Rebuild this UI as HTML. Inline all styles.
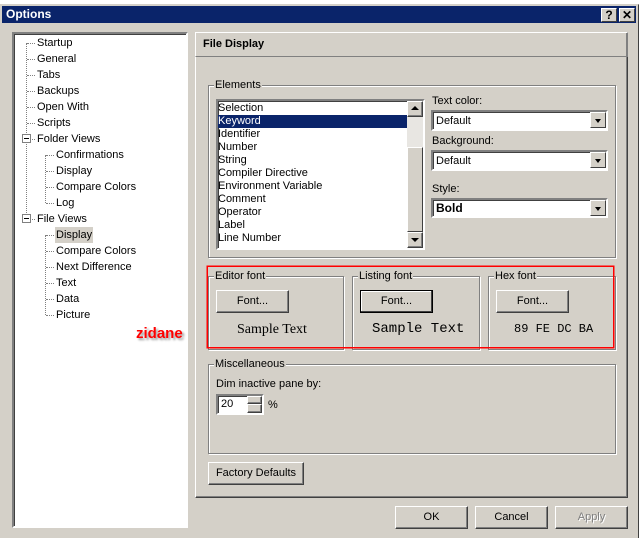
<!DOCTYPE html>
<html><head><meta charset="utf-8"><style>
*{box-sizing:border-box;margin:0;padding:0}
body{width:641px;height:538px;background:#fff;font-family:"Liberation Sans",sans-serif;font-size:11px;color:#000;position:relative;overflow:hidden}
.a{position:absolute}
.win{left:0;top:4px;width:639px;height:534px;background:#d4d0c8;border-right:1px solid #404040;border-top:1px solid #d4d0c8}
.title{left:2px;top:6px;width:634px;height:17px;background:#0a246a;color:#fff;font-weight:bold;font-size:12px;line-height:17px;padding-left:4px}
.tb{top:8px;width:16px;height:14px;background:#d4d0c8;border:1px solid;border-color:#fff #404040 #404040 #fff;font-weight:bold;font-size:12px;line-height:12px;text-align:center;color:#000}
.sunk{border:2px solid;border-color:#808080 #fff #fff #808080;box-shadow:inset 1px 1px 0 #404040}
.grp{border:1px solid #808080;box-shadow:1px 1px 0 #fff, inset 1px 1px 0 #fff}
.lg{background:#d4d0c8;padding:0 1px;line-height:12px}
.btn{background:#d4d0c8;border:1px solid;border-color:#fff #404040 #404040 #fff;box-shadow:inset -1px -1px 0 #808080;text-align:center;line-height:20px}
.t{line-height:16px;white-space:nowrap}
.combo{background:#fff;border:2px solid;border-color:#808080 #fff #fff #808080;box-shadow:inset 1px 1px 0 #404040;padding-left:3px;line-height:18px}
.arr{position:absolute;right:0;top:0;width:16px;height:16px;background:#d4d0c8;border:1px solid;border-color:#fff #404040 #404040 #fff}
.arr:after{content:"";position:absolute;left:4px;top:6px;border:3.5px solid transparent;border-top:4px solid #000;border-bottom:0}
.dl{border-top:1px dotted #808080}
.dv{border-left:1px dotted #808080}
</style></head><body>
<div class="a win"></div>
<div class="a title">Options</div>
<div class="a tb" style="left:601px">?</div>
<div class="a tb" style="left:619px">✕</div>

<!-- tree -->
<div class="a sunk" style="left:12px;top:32px;width:176px;height:496px;background:#fff"></div>
<div class="a dv" style="left:26px;top:43px;height:176px"></div>
<div class="a dv" style="left:45px;top:155px;height:48px"></div>
<div class="a dv" style="left:45px;top:235px;height:80px"></div>
<div id="tree"></div>
<div class="a" style="left:22px;top:134px;width:9px;height:9px;border:1px solid #808080;background:#fff"><div class="a" style="left:1px;top:3px;width:5px;height:1px;background:#000"></div></div>
<div class="a" style="left:22px;top:214px;width:9px;height:9px;border:1px solid #808080;background:#fff"><div class="a" style="left:1px;top:3px;width:5px;height:1px;background:#000"></div></div>

<!-- right panel -->
<div class="a" style="left:195px;top:32px;width:433px;height:466px;border:1px solid;border-color:#fff #404040 #404040 #fff;box-shadow:inset -1px -1px 0 #808080"></div>
<div class="a" style="left:195px;top:32px;width:433px;height:25px;border:1px solid;border-color:#fff #808080 #808080 #fff;font-weight:bold;line-height:22px;padding-left:7px">File Display</div>

<div class="a grp" style="left:208px;top:85px;width:408px;height:173px"></div>
<div class="a lg" style="left:214px;top:79px">Elements</div>
<div class="a sunk" style="left:216px;top:99px;width:209px;height:151px;background:#fff"></div>
<div class="a" style="left:218px;top:101px;line-height:13px;padding-top:1px">
<div>Selection</div><div style="background:#0a246a;color:#fff;width:189px">Keyword</div><div>Identifier</div><div>Number</div><div>String</div><div>Compiler Directive</div><div>Environment Variable</div><div>Comment</div><div>Operator</div><div>Label</div><div>Line Number</div></div>
<div class="a" style="left:407px;top:101px;width:16px;height:147px;background:#e8e6e2"></div>
<div class="a" style="left:407px;top:147px;width:16px;height:85px;background:#d4d0c8;border:1px solid;border-color:#fff #404040 #404040 #fff"></div>
<div class="a btn" style="left:407px;top:101px;width:16px;height:16px"></div>
<div class="a" style="left:411px;top:106px;border:4px solid transparent;border-bottom:4px solid #000;border-top:0"></div>
<div class="a btn" style="left:407px;top:232px;width:16px;height:16px"></div>
<div class="a" style="left:411px;top:238px;border:4px solid transparent;border-top:4px solid #000;border-bottom:0"></div>

<div class="a" style="left:432px;top:95px">Text color:</div>
<div class="a combo" style="left:431px;top:110px;width:177px;height:21px">Default<div class="arr"></div></div>
<div class="a" style="left:432px;top:135px">Background:</div>
<div class="a combo" style="left:431px;top:150px;width:177px;height:21px">Default<div class="arr"></div></div>
<div class="a" style="left:432px;top:183px">Style:</div>
<div class="a combo" style="left:431px;top:198px;width:177px;height:20px;font-weight:bold;font-size:12px;line-height:17px">Bold<div class="arr"></div></div>

<!-- font groups -->
<div class="a grp" style="left:208px;top:276px;width:136px;height:74px"></div>
<div class="a lg" style="left:214px;top:270px">Editor font</div>
<div class="a btn" style="left:216px;top:290px;width:73px;height:23px">Font...</div>
<div class="a" style="left:237px;top:322px;font-family:'Liberation Serif',serif;font-size:14px">Sample Text</div>

<div class="a grp" style="left:352px;top:276px;width:128px;height:74px"></div>
<div class="a lg" style="left:358px;top:270px">Listing font</div>
<div class="a btn" style="left:360px;top:290px;width:73px;height:23px;border-color:#000;box-shadow:inset -1px -1px 0 #404040,inset 1px 1px 0 #fff">Font...</div>
<div class="a" style="left:372px;top:321px;font-family:'Liberation Mono',monospace;font-size:14px">Sample Text</div>

<div class="a grp" style="left:488px;top:276px;width:128px;height:74px"></div>
<div class="a lg" style="left:494px;top:270px">Hex font</div>
<div class="a btn" style="left:496px;top:290px;width:73px;height:23px">Font...</div>
<div class="a" style="left:514px;top:322px;font-family:'Liberation Mono',monospace;font-size:12px">89 FE DC BA</div>

<div class="a" style="left:207px;top:266px;width:407px;height:82px;border:1px solid #f00;box-shadow:0 0 0 0.5px #f00"></div>
<div class="a" style="left:136px;top:325px;color:#f00;font-weight:bold;font-size:15px;text-shadow:2px 2px 2px #999">zidane</div>

<!-- misc -->
<div class="a grp" style="left:208px;top:364px;width:408px;height:90px"></div>
<div class="a lg" style="left:214px;top:358px">Miscellaneous</div>
<div class="a" style="left:216px;top:378px">Dim inactive pane by:</div>
<div class="a sunk" style="left:216px;top:394px;width:48px;height:21px;background:#fff;padding-left:3px;line-height:17px">20</div>
<div class="a btn" style="left:247px;top:396px;width:15px;height:8px"></div>
<div class="a btn" style="left:247px;top:404px;width:15px;height:9px"></div>
<div class="a" style="left:268px;top:399px">%</div>

<div class="a btn" style="left:208px;top:462px;width:96px;height:23px">Factory Defaults</div>

<div class="a btn" style="left:395px;top:506px;width:73px;height:23px">OK</div>
<div class="a btn" style="left:475px;top:506px;width:73px;height:23px">Cancel</div>
<div class="a btn" style="left:555px;top:506px;width:73px;height:23px;color:#808080;text-shadow:1px 1px 0 #fff">Apply</div>

<script>
var items=[["Startup",0],["General",0],["Tabs",0],["Backups",0],["Open With",0],["Scripts",0],["Folder Views",0],["Confirmations",1],["Display",1],["Compare Colors",1],["Log",1],["File Views",0],["Display",1,1],["Compare Colors",1],["Next Difference",1],["Text",1],["Data",1],["Picture",1]];
var h="";items.forEach(function(it,i){var y=35+i*16;var x=it[1]?56:37;
h+='<div class="a dl" style="left:'+(x-10)+'px;top:'+(y+8)+'px;width:8px"></div>';
h+='<div class="a t" style="left:'+(x-1)+'px;top:'+y+'px;padding:0 1px;'+(it[2]?'background:#d4d0c8':'')+'">'+it[0]+'</div>';});
document.getElementById("tree").innerHTML=h;
</script>
</body></html>
